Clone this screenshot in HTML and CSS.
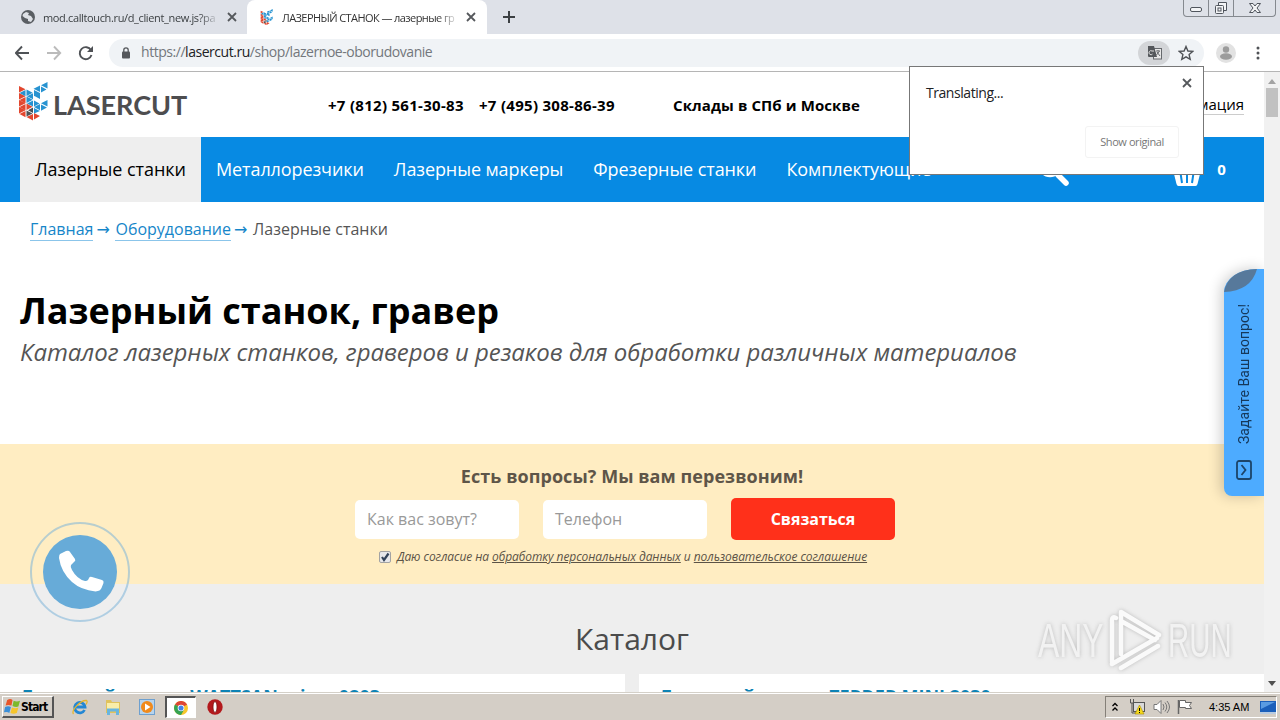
FILE: index.html
```html
<!DOCTYPE html>
<html lang="ru">
<head>
    <meta charset="UTF-8">
    <meta name="viewport" content="width=device-width, initial-scale=1.0">
    <title>ЛАЗЕРНЫЙ СТАНОК — лазерные граверы</title>
    <link rel="stylesheet" href="styles.css">
</head>
<body>
    <!-- Browser tabs -->
    <div class="tabs">
        <div class="tab">
            <svg class="favicon" viewBox="0 0 14 14"><circle cx="7" cy="7" r="7" fill="#5a5e63"/><path d="M2 4l3-2 3 1-1 2 3 1 2 3-2 3-3-1v-2L4 8 1.500 6z" fill="#dee1e6"/></svg>
            <span class="tab-title first">mod.calltouch.ru/d_client_new.js?pa</span>
            <svg class="close" viewBox="0 0 10 10"><path d="M1 1l8 8M9 1L1 9"/></svg>
        </div>
        <div class="tab active">
            <svg class="favicon small" viewBox="0 0 30 38"><use href="#mark"/></svg>
            <span class="tab-title second">ЛАЗЕРНЫЙ СТАНОК — лазерные гр</span>
            <svg class="close" viewBox="0 0 10 10"><path d="M1 1l8 8M9 1L1 9"/></svg>
        </div>
        <svg class="new-tab" viewBox="0 0 12 12"><path d="M6 0v12M0 6h12" stroke="#3c4043" stroke-width="2"/></svg>
        <div class="window-buttons">
            <span><svg width="12" height="10"><rect x=".5" y="4.500" width="11" height="4" rx="1.500"/></svg></span>
            <span><svg width="14" height="14"><path d="M4.500 4V1.500h8v8H10"/><rect x="1.500" y="4.500" width="8" height="8" rx="1"/><rect x="4" y="7" width="3" height="3"/></svg></span>
            <span class="wide"><svg width="14" height="12"><path d="M1.500 1.500h3.500l2 2.500 2-2.500h3.500L9 6l3.500 4.500H9L7 8l-2 2.500H1.500L5 6z"/></svg></span>
        </div>
    </div>

    <!-- Address bar -->
    <div class="toolbar">
        <svg class="nav-icons" viewBox="0 0 84 20" fill="none" stroke-width="1.900">
            <path d="M14 10H1M7 3.500L.8 10 7 16.500" stroke="#4f5256"/>
            <path d="M32 10h13M39 3.500l6.200 6.500-6.200 6.500" stroke="#bbb"/>
            <path d="M76 7.200A6 6 0 1 0 76.500 12" stroke="#4f5256"/><path d="M78 3v6h-6z" fill="#4f5256"/>
        </svg>
        <div class="address">
            <svg width="8" height="12" viewBox="0 0 8 12"><path d="M1.800 5V3a2.200 2.200 0 0 1 4.400 0v2" fill="none" stroke="#55585c" stroke-width="1.300"/><rect y="4.500" width="8" height="7" rx="1" fill="#55585c"/></svg>
            <span class="url">https://<b>lasercut.ru</b>/shop/lazernoe-oborudovanie</span>
            <span class="translate-button"><svg width="15" height="14" viewBox="0 0 15 14"><rect x="6.500" y="2.500" width="8" height="10.500" fill="#e8e8e8" stroke="#66696d"/><path d="M1 0h6l3 11H2a1 1 0 0 1-1-1z" fill="#54575b"/><path d="M7 5H5a2 2 0 1 0 .5 3" fill="none" stroke="#ddd"/><path d="M9 5h4M11 4v1M9.500 9l3-4M10 6l3 4" fill="none" stroke="#66696d"/></svg></span>
            <svg width="16" height="16" viewBox="0 0 16 16"><path d="M8 1.500l1.900 4.500 4.800.4-3.600 3.200 1.100 4.700L8 11.800l-4.200 2.500 1.100-4.700L1.300 6.400 6.100 6z" fill="none" stroke="#4f5256" stroke-width="1.400"/></svg>
        </div>
        <svg class="avatar" viewBox="0 0 20 20"><circle cx="10" cy="10" r="10" fill="#e2e2e2"/><circle cx="10" cy="6.500" r="3.200" fill="#9c9c9c"/><ellipse cx="10" cy="13.500" rx="6" ry="3.300" fill="#9c9c9c"/></svg>
        <svg class="dots" viewBox="0 0 4 14"><circle cx="2" cy="2" r="1.500"/><circle cx="2" cy="7" r="1.500"/><circle cx="2" cy="12" r="1.500"/></svg>
    </div>

    <div class="viewport">
        <div class="page">
            <div class="header">
                <svg class="logo-mark" viewBox="0 0 29 39">
                    <g id="mark">
                        <path fill="#e2472f" d="M0 4l6.500 3.200L0 10.500zM0 11l6.500 3.200L0 17.500zM0 18l6.500 3.200L0 24.500zM0 25l6.500 3.200L0 31.500zM6.500 15v6.200L.5 18zM6.500 22v6.200L.5 25zM6.500 29v6.200L.5 32zM7.500 21.500l6 3.200-6 3.300zM14 32v6.500L7.500 35zM15 31l6 3-6 3.500z"/>
                        <path fill="#2793d1" d="M6.500 8v6.200L.5 11zM7.500 7.500l6.200 3.200L7.500 14zM7.500 14.500l6.200 3.200-6.200 3.300zM14 11.200v6L8 14.200zM14 18.500v6L8 21.500zM21 3.500V10l-6.500-3.200zM15 8l6 3-6 3.200zM28.500 0v6.500L22 3.300zM22 4.500l5.500 3-5.500 3zM21 11v6l-5.500-3zM21 22v6.200L15 25zM15 26l6 3-6 2.500zM28.500 18v6.500L22 21.300zM22 22.500l6 3-6 3.200zM15 18.500l5.500 3-5.500 3z"/>
                        <path fill="#4c5358" d="M7.500 28.500l6 3-6 3zM14 25.500v5.500l-5-2.700z"/>
                    </g>
                </svg>
                <span class="logo-text">LASERCUT</span>
                <span class="phone">+7 (812) 561-30-83</span>
                <span class="phone">+7 (495) 308-86-39</span>
                <span class="stock">Склады в СПб и Москве</span>
                <a class="info-link">Информация</a>
            </div>
            <div class="menu">
                <a class="current">Лазерные станки</a>
                <a>Металлорезчики</a>
                <a>Лазерные маркеры</a>
                <a>Фрезерные станки</a>
                <a>Комплектующие</a>
                <svg class="search" viewBox="0 0 34 34"><circle cx="13" cy="13" r="9.500" fill="none" stroke="#fff" stroke-width="3.500"/><path d="M21 22l8 8" stroke="#fff" stroke-width="5.500" stroke-linecap="round"/></svg>
                <svg class="basket" viewBox="0 0 30 28"><path d="M0 8h30v3H0zM1 11h28l-3.500 14q-.5 2-2 2h-17q-1.500 0-2-2z" fill="#fff"/><path d="M8.500 14l1.500 10M15 14v10M21.500 14L20 24" stroke="#078ae3" stroke-width="2"/><path d="M6 9l6-8M24 9l-6-8" stroke="#fff" stroke-width="2.500"/></svg>
                <span class="count">0</span>
            </div>
            <div class="breadcrumbs">
                <a>Главная</a><i>→</i><a>Оборудование</a><i>→</i><span>Лазерные станки</span>
            </div>
            <h1>Лазерный станок, гравер</h1>
            <p class="subtitle">Каталог лазерных станков, граверов и резаков для обработки различных материалов</p>

            <div class="callback">
                <h3>Есть вопросы? Мы вам перезвоним!</h3>
                <div class="form">
                    <div class="field f-name">Как вас зовут?</div>
                    <div class="field f-phone">Телефон</div>
                    <div class="submit"><span>Связаться</span></div>
                </div>
                <div class="agree">
                    <svg width="12" height="12" viewBox="0 0 12 12"><rect x=".5" y=".5" width="11" height="11" rx="1.500" fill="#e8e8ea" stroke="#a3a3a3"/><path d="M3 6l2 3 4.500-6.500" fill="none" stroke="#34445a" stroke-width="2.200"/></svg>
                    <span>Даю согласие на <u>обработку персональных данных</u> и <u>пользовательское соглашение</u></span>
                </div>
            </div>

            <div class="catalog">
                <h2>Каталог</h2>
                <div class="cards">
                    <div class="card"><span>Лазерный станок WATTSAN micro 0203</span></div>
                    <div class="card"><span>Лазерный станок ZERDER MINI 2030</span></div>
                </div>
            </div>
        </div>
        <div class="scrollbar">
            <svg width="8" height="5"><path d="M0 5l4-5 4 5z" fill="#a3a3a3"/></svg>
            <div class="thumb"></div>
            <svg class="down" width="8" height="5"><path d="M0 0l4 5 4-5z" fill="#505050"/></svg>
        </div>
    </div>

    <!-- Windows taskbar -->
    <div class="taskbar">
        <div class="start">
            <svg width="16" height="15" viewBox="0 0 15 14"><path d="M3 1q3-2 5 0L7 6Q4 5 1.500 6z" fill="#e8562a"/><path d="M9 1.500q3 1.500 6 0L13.500 7Q11 8 8 6.500z" fill="#7cb92c"/><path d="M1 7.500q3-1.500 5.500 0L5 13Q3 11.500 0 12.500z" fill="#3b8fd8"/><path d="M7.500 8q3 1.500 6 0L12 13q-3 1.500-6 0z" fill="#f6c52c"/></svg>
            <b>Start</b>
        </div>
        <svg class="task ie" viewBox="0 0 16 16"><path d="M12.500 11A5.200 5.200 0 1 1 13 8H4" fill="none" stroke="#2387d4" stroke-width="2.800"/><path d="M1.500 15C-1 12 8 1 14.500 1.500q1.500 1-.5 4" fill="none" stroke="#e6b52c" stroke-width="1.300"/></svg>
        <svg class="task folder" viewBox="0 0 16 16"><path d="M1 1h5l1 2h8v11H1z" fill="#e0c25c"/><path d="M2 4h12v7H2z" fill="#f9eda9"/><path d="M2 16V9.500h12V16h-3v-3.500H5V16z" fill="#68b5df"/></svg>
        <svg class="task player" viewBox="0 0 16 16"><rect x=".5" y=".5" width="15" height="15" fill="#b7d4ed" stroke="#6ea0cf"/><circle cx="8" cy="8" r="6" fill="#f08a1c"/><path d="M6 4.500L11.500 8 6 11.500z" fill="#fff"/></svg>
        <div class="chrome-task">
            <svg width="14" height="14" viewBox="0 0 16 16"><circle cx="8" cy="8" r="8" fill="#f7c62c"/><path d="M8 8L1.100 4A8 8 0 0 1 15 4z" fill="#dd4636"/><path d="M8 8L1.100 4A8 8 0 0 0 8 16l3.500-6z" fill="#36a352"/><circle cx="8" cy="8" r="3.800" fill="#fff"/><circle cx="8" cy="8" r="2.900" fill="#4382e8"/></svg>
        </div>
        <svg class="task opera" viewBox="0 0 16 16"><circle cx="8" cy="8" r="7.700" fill="#b3191c"/><ellipse cx="8" cy="8" rx="2" ry="5.500" fill="#fff" stroke="#711" stroke-width=".8"/></svg>
        <div class="tray">
            <svg width="8" height="11" viewBox="0 0 8 11" class="chevrons"><path d="M1.500 4l2.500-2.500L6.500 4M1.500 8.500L4 6l2.500 2.500" fill="none" stroke="#000" stroke-width="1.300"/></svg>
            <svg width="16" height="16" viewBox="0 0 16 16" class="network"><rect x="4.500" y="3.500" width="11" height="9" fill="#d9d9d9" stroke="#555"/><path d="M1.500 0v4h3V0M3 4v10h4" fill="none" stroke="#555"/><path d="M10.500 6l4.500 9H6z" fill="#f5d91c" stroke="#a98c00" stroke-width=".6"/><path d="M10.500 9v3M10.500 13v1" stroke="#000"/></svg>
            <svg width="17" height="14" viewBox="0 0 17 14" class="sound" fill="none" stroke="#777"><path d="M1 4.500h3l4-4v13l-4-4H1z" fill="#fff"/><path d="M10 4q2 3 0 6M12 2.500q3.500 4.500 0 9M14 1q5 6 0 12"/></svg>
            <svg width="16" height="16" viewBox="0 0 16 16" class="flag"><path d="M1.500 1v14" stroke="#666" stroke-width="1.500"/><path d="M2.500 1.500h6v2h6l-2 3 2 3H8.500v-1h-6z" fill="#fff" stroke="#666"/></svg>
            <span>4:35 AM</span>
            <svg width="16" height="13" viewBox="0 0 16 13" class="desktop"><rect width="16" height="11" fill="#1b5fba"/><path d="M1 1h14L1 8z" fill="#5a9be2"/><path d="M0 11h16v2H0z" fill="#b9cbe0"/></svg>
        </div>
    </div>

    <!-- Floating widgets -->
    <div class="ask">
        <svg class="leaf" viewBox="0 0 33 23"><path d="M0 23Q4 1 33 0Q27 22 0 23z" fill="#57799b"/></svg>
        <span>Задайте Ваш вопрос!</span>
        <svg class="ask-icon" viewBox="0 0 16 20"><rect x="1" y="1" width="14" height="18" rx="2"/><path d="M5.500 5l4 5-4 5"/></svg>
    </div>
    <div class="call-button">
        <svg viewBox="0 0 74 74"><circle cx="37" cy="37" r="37" fill="#67abd8"/><path d="M17 19l6-3q3-1 4 1l5 7q1 2-1 3l-3 3q-1 2 1 5 5 9 13 11 3 .5 4-3 1-2 3-1l10 3q2 .5 1.500 3l-2 5q-1 3-6 3.500Q38 55 29 47 18 37 16 23q0-3 1-4z" fill="#fff"/></svg>
    </div>
    <div class="watermark">
        <span>ANY</span>
        <svg viewBox="0 0 54 64"><path d="M3 54V12q0-4 4-2M12 46V4l38 23M3 56l45-26M12 13l34 19M12 60l37-22" fill="none" stroke="#fff" stroke-width="4.500" stroke-linejoin="round" stroke-linecap="round"/></svg>
        <span class="run">RUN</span>
    </div>
    <div class="popup">
        <p>Translating...</p>
        <svg class="close" viewBox="0 0 10 10"><path d="M1 1l8 8M9 1L1 9"/></svg>
        <button>Show original</button>
    </div>
</body>
</html>
```
FILE: styles.css
```css
* {
    box-sizing: border-box;
}
body {
    margin: 0;
    width: 1280px;
    height: 720px;
    overflow: hidden;
    position: relative;
    display: flex;
    flex-direction: column;
    font-family: "Open Sans", sans-serif;
    background: #fff;
}
svg {
    display: block;
    flex: none;
}
h1, h2, h3, p {
    margin: 0;
}
span, a {
    white-space: nowrap;
}
.tabs {
    height: 34px;
    flex: none;
    display: flex;
    background: #dee1e8;
}
.tab {
    display: flex;
    align-items: center;
    width: 247px;
    padding-left: 21px;
    font-size: 11px;
    color: #3c4043;
}
.tab.active {
    width: 240px;
    padding-left: 13px;
    background: #fff;
    border-radius: 8px 8px 0 0;
    color: #333;
}
.favicon {
    width: 14px;
    height: 14px;
}
.favicon.small {
    height: 16px;
}
.tab-title {
    width: 177px;
    margin: 0 7px 0 8px;
    overflow: hidden;
    -webkit-mask-image: linear-gradient(90deg, #000 88%, transparent);
}
.tab-title.first {
    letter-spacing: -0.36px;
}
.tab-title.second {
    letter-spacing: -0.58px;
}
.close {
    width: 10px;
    height: 10px;
    stroke: #55585c;
    stroke-width: 1.8;
}
.new-tab {
    width: 12px;
    height: 12px;
    margin: 11px 0 0 16px;
}
.window-buttons {
    display: flex;
    height: 17px;
    margin-left: auto;
    margin-right: 4px;
    border: 1px solid #85898f;
    border-top: 0;
    border-radius: 0 0 4px 4px;
}
.window-buttons span {
    width: 25px;
    display: flex;
    justify-content: center;
    align-items: center;
    border-right: 1px solid #85898f;
}
.window-buttons .wide {
    width: 41px;
    border: 0;
}
.window-buttons svg {
    fill: #f3f4f6;
    stroke: #50555d;
}
.toolbar {
    height: 38px;
    flex: none;
    display: flex;
    align-items: center;
    border-bottom: 1px solid #b5b5b5;
    padding-left: 15px;
}
.nav-icons {
    width: 84px;
    height: 20px;
    margin-right: 10px;
}
.address {
    width: 1095px;
    height: 28px;
    display: flex;
    align-items: center;
    background: #f0f3f6;
    border-radius: 14px;
    padding: 0 10px 0 13px;
}
.url {
    margin-left: 11px;
    margin-top: -2px;
    font-size: 14px;
    letter-spacing: -0.46px;
    color: #73777c;
}
.url b {
    font-weight: normal;
    color: #202124;
}
.translate-button {
    width: 32px;
    height: 24px;
    margin: 0 8px 0 auto;
    border-radius: 12px;
    background: #d3d5d8;
    display: flex;
    align-items: center;
    justify-content: center;
}
.avatar {
    width: 20px;
    height: 20px;
    margin-left: 12px;
}
.dots {
    width: 4px;
    height: 14px;
    margin-left: 20px;
    fill: #4f5256;
}
.viewport {
    height: 620px;
    flex: none;
    display: flex;
    overflow: hidden;
}
.page {
    width: 1264px;
}
.header {
    height: 65px;
    display: flex;
    align-items: center;
    padding: 1px 20px 0 19px;
    font-size: 15px;
}
.logo-mark {
    width: 29px;
    height: 39px;
    margin-top: -8px;
}
.logo-text {
    width: 280px;
    padding-left: 5px;
    margin-top: -2px;
    font: bold 27px Lato, sans-serif;
    color: #4d4d4f;
}
.phone {
    width: 151px;
    font-weight: bold;
    letter-spacing: 0.29px;
    color: #000;
}
.stock {
    margin-left: 43px;
    font-weight: bold;
    letter-spacing: 0.1px;
    color: #000;
}
.info-link {
    margin-left: auto;
    border-bottom: 1px solid #ccc;
    line-height: 19px;
}
.menu {
    height: 65px;
    display: flex;
    align-items: center;
    padding-left: 20px;
    background: #078ae3;
    color: #fff;
    font-size: 18px;
}
.menu a {
    padding: 0 15px;
    line-height: 65px;
    letter-spacing: -0.09px;
}
.menu .current {
    background: #eee;
    color: #000;
    letter-spacing: -0.05px;
}
.search {
    width: 34px;
    height: 34px;
    margin-left: 91px;
}
.basket {
    width: 30px;
    height: 28px;
    margin: 6px 0 0 101px;
}
.count {
    margin-left: 15px;
    margin-top: -2px;
    font-size: 15px;
    font-weight: bold;
}
.breadcrumbs {
    height: 54px;
    display: flex;
    align-items: center;
    padding-left: 30px;
    font-size: 16px;
    color: #555;
}
.breadcrumbs a {
    color: #1686c9;
    border-bottom: 1px solid #8bc5ea;
}
.breadcrumbs i {
    width: 22px;
    padding-left: 3px;
    font: 16px "DejaVu Sans", sans-serif;
    color: #1686c9;
}
h1 {
    margin-top: 30px;
    padding-left: 20px;
    font-size: 36px;
    line-height: 50px;
    color: #000;
}
.subtitle {
    padding-left: 20px;
    font-size: 24px;
    line-height: 32px;
    font-style: italic;
    letter-spacing: -0.05px;
    color: #555;
}
.callback {
    height: 140px;
    margin-top: 76px;
    padding-top: 20px;
    background: #ffedc2;
    display: flex;
    flex-direction: column;
    align-items: center;
}
.callback h3 {
    font-size: 18px;
    line-height: 25px;
    letter-spacing: 0.05px;
    color: #5e5548;
}
.form {
    display: flex;
    align-items: center;
    gap: 24px;
    margin-top: 9px;
    margin-right: 14px;
}
.field {
    width: 164px;
    height: 39px;
    padding-left: 12px;
    line-height: 39px;
    border-radius: 5px;
    background: #fff;
    color: #999;
    font-size: 16px;
}
.submit {
    width: 164px;
    height: 42px;
    border-radius: 5px;
    background: #ff301a;
    color: #fff;
    font-size: 16px;
    font-weight: bold;
    line-height: 42px;
    text-align: center;
}
.agree {
    display: flex;
    align-items: center;
    gap: 6px;
    margin-top: 8px;
    margin-right: 18px;
    font-size: 12px;
    line-height: 18px;
    font-style: italic;
    letter-spacing: -0.07px;
    color: #5c5346;
}
.catalog {
    height: 110px;
    padding-top: 34px;
    background: #eee;
}
.catalog h2 {
    height: 56px;
    font-size: 30px;
    font-weight: normal;
    line-height: 41px;
    text-align: center;
    color: #4b4b4b;
}
.cards {
    display: flex;
    gap: 14px;
}
.card {
    width: 625px;
    flex: none;
    padding: 10px 20px;
    background: #fff;
    font-size: 18px;
    font-weight: bold;
    line-height: 25px;
    color: #0d83b5;
}
.scrollbar {
    width: 16px;
    height: 620px;
    padding: 7px 0 6px;
    display: flex;
    flex-direction: column;
    align-items: center;
    background: #f1f1f1;
}
.thumb {
    width: 12px;
    height: 29px;
    margin-top: 4px;
    background: #c1c1c1;
}
.down {
    margin-top: auto;
}
.taskbar {
    position: relative;
    height: 28px;
    display: flex;
    align-items: center;
    padding: 3px 3px 2px 2px;
    border-top: 1px solid #d4d0c8;
    background: #d4cec6;
    box-shadow: inset 0 1px #fff;
}
.start {
    width: 52px;
    height: 22px;
    display: flex;
    align-items: center;
    padding-left: 1px;
    gap: 1px;
    border: 1px solid #fff;
    border-right: 2px solid #555;
    border-bottom: 2px solid #555;
    font: 12px "DejaVu Sans Condensed", "DejaVu Sans", sans-serif;
    letter-spacing: -0.9px;
}
.task {
    width: 16px;
    height: 16px;
}
.ie {
    margin-left: 18px;
}
.folder {
    margin-left: 17px;
}
.player {
    margin-left: 18px;
}
.chrome-task {
    width: 31px;
    height: 22px;
    margin-left: 10px;
    border: 1px solid #fff;
    border-top: 2px solid #555;
    border-left: 2px solid #555;
    background: #fff;
    display: flex;
    align-items: center;
    justify-content: center;
}
.opera {
    margin-left: 11px;
}
.tray {
    width: 172px;
    height: 22px;
    display: flex;
    align-items: center;
    margin-left: auto;
    border: 1px solid #fff;
    border-top-color: #858078;
    border-left-color: #858078;
    font: 11px "Liberation Sans", sans-serif;
    color: #000;
}
.chevrons {
    margin-left: 5px;
}
.network {
    margin-left: 10px;
}
.sound {
    margin-left: 8px;
}
.flag {
    margin-left: 7px;
}
.tray span {
    width: 51px;
    margin-left: 16px;
}
.ask {
    position: absolute;
    left: 1224px;
    top: 269px;
    width: 40px;
    height: 227px;
    padding-bottom: 16px;
    display: flex;
    flex-direction: column;
    align-items: center;
    border-radius: 33px 0 0 8px / 23px 0 0 8px;
    background: #4dabff;
    box-shadow: -3px 0 14px rgba(0, 0, 0, 0.2);
    clip-path: inset(-30px 0 -30px -30px);
}
.leaf {
    width: 33px;
    height: 23px;
    align-self: flex-start;
}
.ask span {
    height: 142px;
    margin-top: 10px;
    writing-mode: vertical-rl;
    transform: rotate(180deg);
    font: 14px Roboto, sans-serif;
    line-height: 20px;
    letter-spacing: 0.05px;
    color: #16385a;
}
.ask-icon {
    width: 16px;
    height: 20px;
    margin-top: auto;
    fill: none;
    stroke: #1c4469;
    stroke-width: 1.8;
}
.call-button {
    position: absolute;
    left: 30px;
    top: 522px;
    width: 100px;
    height: 100px;
    padding: 11px;
    border: 2px solid rgba(125, 180, 217, 0.55);
    border-radius: 50%;
}
.watermark {
    position: absolute;
    left: 1038px;
    top: 608px;
    height: 64px;
    display: flex;
    align-items: center;
    gap: 5px;
    color: #f4f4f4;
    filter: drop-shadow(0 0 2px #aaa);
    opacity: 0.75;
}
.watermark span {
    width: 66px;
    font: 49px "Liberation Sans", sans-serif;
    transform: scaleX(0.65);
    transform-origin: left;
}
.watermark .run {
    transform: scaleX(0.6);
}
.watermark svg {
    width: 54px;
    height: 64px;
}
.popup {
    position: absolute;
    left: 909px;
    top: 66px;
    width: 295px;
    height: 109px;
    display: grid;
    grid-template-columns: 1fr auto;
    padding: 11px 16px 16px;
    border: 1px solid #777;
    background: #fff;
}
.popup p {
    font-size: 14px;
    line-height: 30px;
    letter-spacing: -0.45px;
    color: #202124;
}
.popup .close {
    margin-right: -5px;
    justify-self: end;
}
.popup button {
    grid-column: 2;
    width: 94px;
    height: 32px;
    align-self: end;
    margin-right: 8px;
    padding: 0 0 2px;
    border: 1px solid #f3f3f3;
    border-radius: 3px;
    background: #fff;
    font: 11px "Open Sans", sans-serif;
    letter-spacing: -0.42px;
    color: #777;
}
```
